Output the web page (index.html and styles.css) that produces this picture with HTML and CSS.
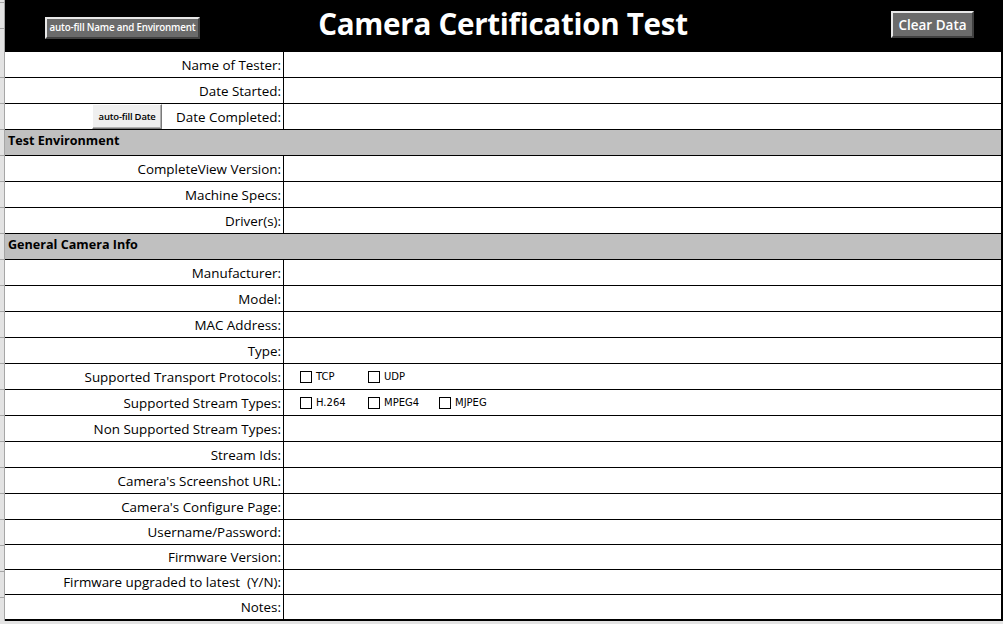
FILE: index.html
```html
<!DOCTYPE html>
<html>
<head>
<meta charset="utf-8">
<link rel="stylesheet" href="styles.css">
</head>
<body>
<div class="page">
  <div class="gutter"></div>
  <div class="sheet">
    <header class="banner">
      <div class="banner-left"><button class="btn-dark btn-small">auto-fill Name and Environment</button></div>
      <h1 class="title">Camera Certification Test</h1>
      <div class="banner-right"><button class="btn-dark btn-clear">Clear Data</button></div>
    </header>

    <div class="row"><div class="label">Name of Tester:</div><div class="value"></div></div>
    <div class="row"><div class="label">Date Started:</div><div class="value"></div></div>
    <div class="row"><div class="label"><button class="btn-light">auto-fill Date</button><span class="label-text">Date Completed:</span></div><div class="value"></div></div>

    <div class="section">Test Environment</div>
    <div class="row"><div class="label">CompleteView Version:</div><div class="value"></div></div>
    <div class="row"><div class="label">Machine Specs:</div><div class="value"></div></div>
    <div class="row"><div class="label">Driver(s):</div><div class="value"></div></div>

    <div class="section">General Camera Info</div>
    <div class="row"><div class="label">Manufacturer:</div><div class="value"></div></div>
    <div class="row"><div class="label">Model:</div><div class="value"></div></div>
    <div class="row"><div class="label">MAC Address:</div><div class="value"></div></div>
    <div class="row"><div class="label">Type:</div><div class="value"></div></div>
    <div class="row"><div class="label">Supported Transport Protocols:</div>
      <div class="value checks">
        <label class="check"><span class="box"></span>TCP</label>
        <label class="check"><span class="box"></span>UDP</label>
      </div></div>
    <div class="row"><div class="label">Supported Stream Types:</div>
      <div class="value checks">
        <label class="check"><span class="box"></span>H.264</label>
        <label class="check wide"><span class="box"></span>MPEG4</label>
        <label class="check"><span class="box"></span>MJPEG</label>
      </div></div>
    <div class="row"><div class="label">Non Supported Stream Types:</div><div class="value"></div></div>
    <div class="row"><div class="label">Stream Ids:</div><div class="value"></div></div>
    <div class="row"><div class="label">Camera's Screenshot URL:</div><div class="value"></div></div>
    <div class="row"><div class="label">Camera's Configure Page:</div><div class="value"></div></div>
    <div class="row short"><div class="label">Username/Password:</div><div class="value"></div></div>
    <div class="row short"><div class="label">Firmware Version:</div><div class="value"></div></div>
    <div class="row short"><div class="label">Firmware upgraded to latest&nbsp; (Y/N):</div><div class="value"></div></div>
    <div class="row short last"><div class="label">Notes:</div><div class="value"></div></div>
  </div>
</div>
</body>
</html>
```
FILE: styles.css
```css
html, body {
  margin: 0;
  padding: 0;
}
body {
  background: #e3e3e3;
  font-family: "Open Sans", "Liberation Sans", sans-serif;
  color: #000;
  overflow: hidden;
}
.page {
  display: flex;
  width: 1003px;
}
.gutter {
  width: 4px;
  border-right: 1px solid #a6a6a6;
  background: #e3e3e3;
  background-image: repeating-linear-gradient(to bottom, transparent 0, transparent 25px, #a6a6a6 25px, #a6a6a6 26px);
  background-position: 0 52px;
  background-repeat: repeat-y;
  flex: none;
}
.sheet {
  width: 996px;
  border-right: 2px solid #000;
  background: #fff;
}
.banner {
  height: 52px;
  background: #000;
  display: grid;
  grid-template-columns: 1fr auto 1fr;
  align-items: start;
}
.banner-left {
  padding-left: 40px;
  padding-top: 14px;
}
.banner-right {
  display: flex;
  justify-content: flex-end;
  padding-right: 27px;
  padding-top: 11px;
}
.title {
  margin: 0;
  color: #fff;
  font-size: 29.6px;
  font-weight: 700;
  letter-spacing: -0.3px;
  line-height: 48px;
}
.btn-dark {
  background: #6b6b6b;
  color: #fff;
  font-family: "Open Sans", "Liberation Sans", sans-serif;
  font-weight: 600;
  border: 2px solid;
  border-color: #e8e8e8 #404040 #404040 #e8e8e8;
  padding: 0;
  margin: 0;
}
.btn-small {
  width: 155px;
  height: 22px;
  font-size: 9.8px;
  letter-spacing: -0.2px;
}
.btn-clear {
  width: 83px;
  height: 27px;
  font-size: 13.5px;
}
.btn-light {
  background: #efefef;
  color: #000;
  font-family: "Open Sans", "Liberation Sans", sans-serif;
  font-weight: 600;
  font-size: 9.5px;
  letter-spacing: -0.2px;
  border: 1px solid;
  border-color: #ffffff #7a7a7a #7a7a7a #ffffff;
  box-shadow: inset -1px -1px 0 #b0b0b0;
  padding: 0;
  margin: 0 14px 0 0;
  width: 70px;
  height: 25px;
}
.row {
  display: flex;
  height: 25px;
  border-bottom: 1px solid #000;
}
.row.short {
  height: 24px;
}
.row.last {
  border-bottom-width: 2px;
}
.label {
  width: 276px;
  flex: none;
  border-right: 1px solid #000;
  display: flex;
  justify-content: flex-end;
  align-items: center;
  padding-right: 2px;
  font-size: 13.4px;
  white-space: nowrap;
}
.value {
  flex: 1;
}
.section {
  height: 25px;
  border-bottom: 1px solid #000;
  background: #c0c0c0;
  font-weight: 700;
  font-size: 12.6px;
  line-height: 21px;
  padding-left: 3px;
}
.checks {
  display: flex;
  align-items: center;
  padding-left: 16px;
  font-family: "DejaVu Sans", "Liberation Sans", sans-serif;
  font-size: 10px;
}
.check {
  display: flex;
  align-items: center;
  width: 68px;
}
.check.wide {
  width: 71px;
}
.box {
  width: 10px;
  height: 10px;
  border: 1px solid #000;
  margin-right: 4px;
  background: #fff;
}
```
